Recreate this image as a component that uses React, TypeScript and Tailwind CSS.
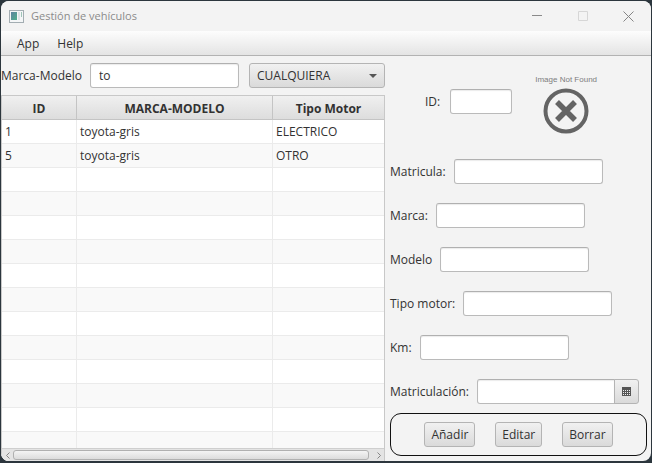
import { useState } from "react";
import type { ReactNode } from "react";

const field =
  "h-[25px] rounded-[3px] border border-[#bababa] border-t-[#b0b0b0] bg-white px-2 text-xs text-[#323232] shadow-[inset_0_1px_1px_#ececec] outline-none";
const raised =
  "rounded-[3px] border border-[#b4b4b4] bg-linear-to-b from-[#f1f1f1] to-[#dadada] text-xs text-[#323232]";

const vehicles = [
  { id: "1", name: "toyota-gris", motor: "ELECTRICO" },
  { id: "5", name: "toyota-gris", motor: "OTRO" },
];
const emptyRows = Array.from({ length: 12 }, (_, i) => i);

function TitleBar() {
  return (
    <header className="flex h-[30px] shrink-0 items-center bg-[#f3f3f3] pl-2">
      <svg width="15" height="13" viewBox="0 0 15 13" aria-hidden="true">
        <defs>
          <linearGradient id="pane" x1="0" y1="0" x2="1" y2="1">
            <stop offset="0" stopColor="#5d83a0" />
            <stop offset="1" stopColor="#4fae8b" />
          </linearGradient>
        </defs>
        <rect x="0.5" y="0.5" width="14" height="12" fill="#f4f6f7" stroke="#a3adb2" />
        <rect x="2" y="2" width="6" height="8" fill="url(#pane)" />
        <rect x="9" y="2" width="2" height="8" fill="#dde3e6" />
        <rect x="12" y="2" width="1" height="5" fill="#9fc4b8" />
      </svg>
      <h1 className="ml-[7px] flex-1 text-[11px] text-[#8b8b8b]">Gestión de vehículos</h1>
      <button aria-label="Minimizar" className="flex h-full w-[46px] items-center justify-center text-[#8a8a8a]">
        <svg width="10" height="10" viewBox="0 0 10 10" stroke="currentColor" aria-hidden="true">
          <path d="M0 4.5H10" />
        </svg>
      </button>
      <button aria-label="Maximizar" className="flex h-full w-[45px] items-center justify-center text-[#d6d6d6]" disabled>
        <svg width="10" height="10" viewBox="0 0 10 10" fill="none" stroke="currentColor" aria-hidden="true">
          <path d="M.5.5h9v9h-9z" />
        </svg>
      </button>
      <button aria-label="Cerrar" className="flex h-full w-[46px] items-center justify-center text-[#858585]">
        <svg width="11" height="11" viewBox="0 0 11 11" stroke="currentColor" aria-hidden="true">
          <path d="M.5.5l10 10M10.5.5l-10 10" />
        </svg>
      </button>
    </header>
  );
}

function MenuBar() {
  return (
    <nav className="flex h-[25px] shrink-0 items-center border-b border-[#b2b2b2] bg-linear-to-b from-[#fdfdfd] to-[#e4e4e4] pt-[2px] pl-2">
      <button className="px-2">App</button>
      <button className="px-[10px]">Help</button>
    </nav>
  );
}

function Filters() {
  const [query, setQuery] = useState("to");
  return (
    <div className="flex items-center gap-[10px] py-[7px]">
      <label htmlFor="query" className="w-[79px] shrink-0 whitespace-nowrap">
        Marca-Modelo
      </label>
      <input id="query" value={query} onChange={(e) => setQuery(e.target.value)} className={`${field} w-[149px]`} />
      <div className="relative w-[137px]">
        <select aria-label="Tipo de motor" className={`${raised} h-[25px] w-full appearance-none pl-[7px]`}>
          <option>CUALQUIERA</option>
          <option>ELECTRICO</option>
          <option>OTRO</option>
        </select>
        <svg className="pointer-events-none absolute top-[11px] right-2" width="8" height="4" viewBox="0 0 8 4" aria-hidden="true">
          <path d="M0 0h8L4 4z" fill="#555" />
        </svg>
      </div>
    </div>
  );
}

function VehicleTable() {
  const head = "border-r border-b border-[#c4c4c4] p-0 pt-[2px] text-center font-bold";
  const cell = "border-r border-b border-[#ebebeb] p-0 pt-px pl-[3px]";
  return (
    <div className="flex min-h-0 flex-1 flex-col border-t border-r border-l border-[#c8c8c8] bg-white">
      <div className="min-h-0 flex-1 overflow-hidden">
        <table className="w-full table-fixed border-separate border-spacing-0">
          <thead>
            <tr className="h-6 bg-linear-to-b from-[#f0f0f0] to-[#dcdcdc]">
              <th className={`${head} w-[75px]`}>ID</th>
              <th className={`${head} w-[196px]`}>MARCA-MODELO</th>
              <th className={`${head} border-r-0`}>Tipo Motor</th>
            </tr>
          </thead>
          <tbody>
            {vehicles.map((v) => (
              <tr key={v.id} className="h-6 even:bg-[#f9f9f9]">
                <td className={cell}>{v.id}</td>
                <td className={cell}>{v.name}</td>
                <td className={`${cell} border-r-0`}>{v.motor}</td>
              </tr>
            ))}
            {emptyRows.map((i) => (
              <tr key={i} className="h-6 even:bg-[#f9f9f9]">
                <td className={cell} />
                <td className={cell} />
                <td className={`${cell} border-r-0`} />
              </tr>
            ))}
          </tbody>
        </table>
      </div>
      <div className="flex h-[13px] shrink-0 items-center border-t border-[#cfcfcf] bg-[#e4e4e4] text-[#858585]">
        <button aria-label="Desplazar a la izquierda" className="flex w-[11px] justify-center">
          <svg width="4" height="7" viewBox="0 0 4 7" fill="none" stroke="currentColor" aria-hidden="true">
            <path d="M3.5.5l-3 3 3 3" />
          </svg>
        </button>
        <div className="h-[10px] flex-1 rounded-[3px] border border-[#b0b0b0] bg-linear-to-b from-[#f4f4f4] to-[#dcdcdc]" />
        <button aria-label="Desplazar a la derecha" className="ml-1 flex w-[11px] justify-center">
          <svg width="4" height="7" viewBox="0 0 4 7" fill="none" stroke="currentColor" aria-hidden="true">
            <path d="M.5.5l3 3-3 3" />
          </svg>
        </button>
      </div>
    </div>
  );
}

function MissingImage() {
  return (
    <figure className="flex flex-col items-center">
      <figcaption className="font-['Liberation_Sans',sans-serif] text-[8px] leading-[12px] whitespace-nowrap text-[#7d7d7d]">
        Image Not Found
      </figcaption>
      <svg className="mt-[2px]" width="46" height="46" viewBox="0 0 46 46" fill="none" stroke="#646464" aria-hidden="true">
        <circle cx="23" cy="23" r="20.5" strokeWidth="4" />
        <path d="M14 14l18 18M32 14L14 32" strokeWidth="5.5" />
      </svg>
    </figure>
  );
}

function FormRow({ id, label, children }: { id: string; label: string; children?: ReactNode }) {
  return (
    <div className="flex items-center gap-2">
      <label htmlFor={id} className="pt-px whitespace-nowrap">
        {label}
      </label>
      {children ?? <input id={id} className={`${field} w-[149px]`} />}
    </div>
  );
}

function DetailForm() {
  return (
    <form className="flex min-w-0 flex-1 flex-col pr-[4px] pl-[5px]" onSubmit={(e) => e.preventDefault()}>
      <div className="flex items-start gap-[23px] pt-[18px] pl-[35px]">
        <div className="flex items-center gap-[10px] pt-[15px]">
          <label htmlFor="id" className="pt-px">ID:</label>
          <input id="id" className={`${field} w-[62px]`} />
        </div>
        <MissingImage />
      </div>
      <div className="flex flex-col gap-[19px] pt-[25px]">
        <FormRow id="matricula" label="Matricula:" />
        <FormRow id="marca" label="Marca:" />
        <FormRow id="modelo" label="Modelo" />
        <FormRow id="motor" label="Tipo motor:" />
        <FormRow id="km" label="Km:" />
        <FormRow id="fecha" label="Matriculación:">
          <div className="flex">
            <input id="fecha" className={`${field} w-[138px] rounded-r-none`} />
            <button
              type="button"
              aria-label="Abrir calendario"
              className={`${raised} -ml-px flex h-[25px] w-[25px] items-center justify-center rounded-l-none`}
            >
              <svg width="9" height="9" viewBox="0 0 9 9" aria-hidden="true">
                <path d="M0 0h9v9H0z" fill="#555" />
                <path
                  d="M1 3h1v1H1zM3 3h1v1H3zM5 3h1v1H5zM7 3h1v1H7zM1 5h1v1H1zM3 5h1v1H3zM5 5h1v1H5zM7 5h1v1H7zM1 7h1v1H1zM3 7h1v1H3zM5 7h1v1H5zM7 7h1v1H7z"
                  fill="#eee"
                />
              </svg>
            </button>
          </div>
        </FormRow>
      </div>
      <div className="mt-[9px] flex h-[43px] items-center justify-center gap-5 rounded-[11px] border border-[#111]">
        <button type="button" className={`${raised} h-[25px] px-[6px]`}>Añadir</button>
        <button type="button" className={`${raised} h-[25px] px-[6px]`}>Editar</button>
        <button type="button" className={`${raised} h-[25px] px-[6px]`}>Borrar</button>
      </div>
    </form>
  );
}

export default function App() {
  return (
    <div className="flex h-screen flex-col bg-[#2c363d] px-px pt-px pb-[2px] font-['Open_Sans','Noto_Sans',sans-serif] text-xs text-[#323232]">
      <div className="flex min-h-0 flex-1 flex-col overflow-hidden rounded-[8px] bg-[#f3f3f3]">
        <TitleBar />
        <MenuBar />
        <main className="flex min-h-0 flex-1">
          <section className="flex w-[384px] shrink-0 flex-col">
            <Filters />
            <VehicleTable />
          </section>
          <DetailForm />
        </main>
      </div>
    </div>
  );
}
